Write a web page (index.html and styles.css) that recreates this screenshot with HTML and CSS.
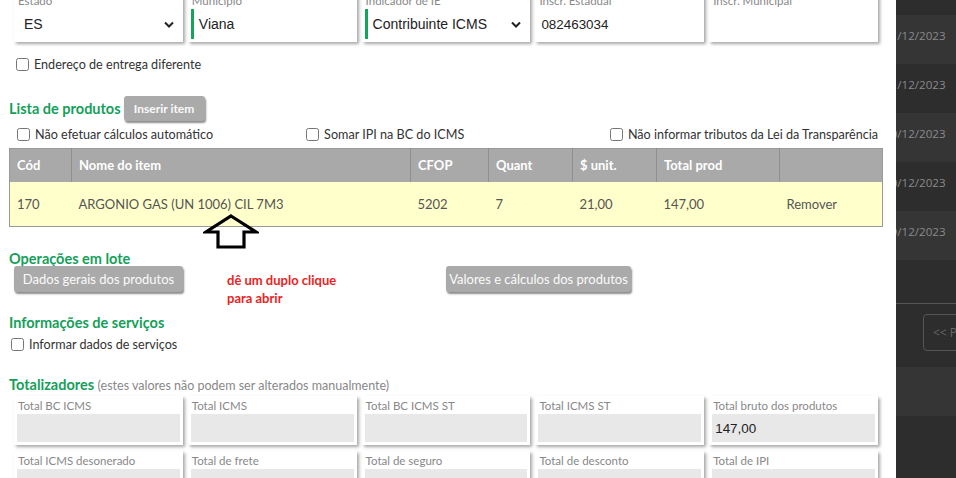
FILE: index.html
```html
<!DOCTYPE html>
<html lang="pt-BR">
<head>
    <meta charset="UTF-8">
    <title>Nota fiscal - produtos</title>
    <link rel="stylesheet" href="styles.css">
</head>
<body>
    <div class="page">
        <main class="form">
            <div class="fields">
                <div class="card">
                    <span class="card-label">Estado</span>
                    <div class="field select">ES
                        <svg class="chevron" width="10" height="7" viewBox="0 0 10 7"><path d="M1 1.5 5 5.5 9 1.5" fill="none" stroke="#222" stroke-width="2"/></svg>
                    </div>
                </div>
                <div class="card">
                    <span class="card-label">Município</span>
                    <div class="field marked">Viana</div>
                </div>
                <div class="card">
                    <span class="card-label">Indicador de IE</span>
                    <div class="field select marked">Contribuinte ICMS
                        <svg class="chevron" width="10" height="7" viewBox="0 0 10 7"><path d="M1 1.5 5 5.5 9 1.5" fill="none" stroke="#222" stroke-width="2"/></svg>
                    </div>
                </div>
                <div class="card">
                    <span class="card-label">Inscr. Estadual</span>
                    <div class="field input">082463034</div>
                </div>
                <div class="card">
                    <span class="card-label">Inscr. Municipal</span>
                    <div class="field input"></div>
                </div>
            </div>

            <label class="check delivery"><input type="checkbox"> Endereço de entrega diferente</label>

            <div class="section-head">
                <h2>Lista de produtos</h2>
                <button class="btn btn-small">Inserir item</button>
            </div>

            <div class="check-row">
                <label class="check"><input type="checkbox"> Não efetuar cálculos automático</label>
                <label class="check"><input type="checkbox"> Somar IPI na BC do ICMS</label>
                <label class="check"><input type="checkbox"> Não informar tributos da Lei da Transparência</label>
            </div>

            <div class="table-wrap">
                <table class="products">
                    <thead>
                        <tr>
                            <th class="c-cod">Cód</th>
                            <th class="c-name">Nome do item</th>
                            <th class="c-cfop">CFOP</th>
                            <th class="c-qty">Quant</th>
                            <th class="c-unit">$ unit.</th>
                            <th class="c-total">Total prod</th>
                            <th></th>
                        </tr>
                    </thead>
                    <tbody>
                        <tr>
                            <td>170</td>
                            <td>ARGONIO GAS (UN 1006) CIL 7M3</td>
                            <td>5202</td>
                            <td>7</td>
                            <td>21,00</td>
                            <td>147,00</td>
                            <td>Remover</td>
                        </tr>
                    </tbody>
                </table>
                <!-- seta de anotação -->
                <svg class="hint-arrow" width="56" height="36" viewBox="0 0 56 36">
                    <path d="M28 2 L53 18 L41 18 L41 33 L15 33 L15 18 L3 18 Z" fill="none" stroke="#000" stroke-width="3.2" stroke-linejoin="miter"/>
                </svg>
            </div>

            <h2 class="section-title">Operações em lote</h2>
            <div class="batch-row">
                <button class="btn btn-wide">Dados gerais dos produtos</button>
                <p class="note">dê um duplo clique<br>para abrir</p>
                <button class="btn btn-calc">Valores e cálculos dos produtos</button>
            </div>

            <h2 class="section-title services">Informações de serviços</h2>
            <label class="check services-check"><input type="checkbox"> Informar dados de serviços</label>

            <h2 class="section-title totals-title">Totalizadores <span class="muted">(estes valores não podem ser alterados manualmente)</span></h2>
            <div class="totals">
                <div class="card total"><span class="card-label">Total BC ICMS</span><div class="readonly"></div></div>
                <div class="card total"><span class="card-label">Total ICMS</span><div class="readonly"></div></div>
                <div class="card total"><span class="card-label">Total BC ICMS ST</span><div class="readonly"></div></div>
                <div class="card total"><span class="card-label">Total ICMS ST</span><div class="readonly"></div></div>
                <div class="card total"><span class="card-label">Total bruto dos produtos</span><div class="readonly">147,00</div></div>
                <div class="card total"><span class="card-label">Total ICMS desonerado</span><div class="readonly"></div></div>
                <div class="card total"><span class="card-label">Total de frete</span><div class="readonly"></div></div>
                <div class="card total"><span class="card-label">Total de seguro</span><div class="readonly"></div></div>
                <div class="card total"><span class="card-label">Total de desconto</span><div class="readonly"></div></div>
                <div class="card total"><span class="card-label">Total de IPI</span><div class="readonly"></div></div>
            </div>
        </main>

        <aside class="list-panel">
            <div class="row dark short"></div>
            <div class="row"><span>21/12/2023</span></div>
            <div class="row dark"><span>21/12/2023</span></div>
            <div class="row"><span>20/12/2023</span></div>
            <div class="row dark"><span>20/12/2023</span></div>
            <div class="row"><span>19/12/2023</span></div>
            <div class="row dark tall"></div>
            <div class="pager">
                <span class="pager-btn">&lt;&lt; Primeira</span>
            </div>
            <div class="row"></div>
            <div class="row dark"></div>
        </aside>
    </div>
</body>
</html>
```

FILE: styles.css
```css
* {
    box-sizing: border-box;
}

body {
    margin: 0;
    background: #ffffff;
    color: #444;
    font-family: 'Lato', 'Open Sans', sans-serif;
    font-size: 12px;
    overflow: hidden;
}

.page {
    display: grid;
    grid-template-columns: 896px 1fr;
    height: 478px;
    overflow: hidden;
}

.form {
    padding: 0 13px 0 9px;
    margin-top: -10px;
}

/* cartões de campos */
.fields,
.totals {
    display: grid;
    grid-template-columns: repeat(5, 1fr);
    gap: 6px 5px;
    margin: 0 5px;
}

.card {
    background: #fff;
    padding: 3px;
    box-shadow: 2px 2px 3px rgba(0, 0, 0, 0.35);
}

.card-label {
    display: block;
    color: #888;
    font-size: 11.5px;
    line-height: 16px;
    padding-left: 1px;
}

.field {
    position: relative;
    height: 30px;
    display: flex;
    align-items: center;
    padding-left: 7px;
    font-family: 'Liberation Sans', Arial, sans-serif;
    font-size: 14px;
    color: #222;
}

.field.input {
    font-size: 13.4px;
    padding-left: 3px;
}

.field.marked {
    border-left: 3px solid #13a55c;
    padding-left: 5px;
}

.chevron {
    position: absolute;
    right: 6px;
    top: 12px;
}

/* checkboxes */
.check {
    display: flex;
    align-items: center;
    gap: 5px;
    color: #333;
    font-size: 12.6px;
}

.check input {
    margin: 0;
    width: 13px;
    height: 13px;
}

.delivery {
    margin: 15px 0 0 7px;
}

.section-head {
    display: flex;
    align-items: center;
    gap: 3px;
    margin-top: 24px;
}

h2 {
    margin: 0;
    color: #14a05a;
    font-size: 14.5px;
    font-weight: 700;
}

.btn {
    background: #aaaaaa;
    border: none;
    border-radius: 3px;
    color: #fafafa;
    font-family: 'Lato', 'Open Sans', sans-serif;
    font-size: 13px;
    padding: 0 8px;
    height: 26px;
    box-shadow: 1px 2px 2px rgba(0, 0, 0, 0.45);
    cursor: pointer;
}

.btn-small {
    font-weight: 700;
    font-size: 12px;
    height: 25px;
    width: 81px;
    padding: 0;
}

.check-row {
    display: flex;
    margin: 6px 0 0 8px;
    color: #333;
}

.check-row .check:nth-child(2) {
    margin-left: 93px;
}

.check-row .check:nth-child(3) {
    margin-left: auto;
    margin-right: 5px;
}

/* tabela de produtos */
.table-wrap {
    position: relative;
    margin-top: 6px;
}

.products {
    width: 100%;
    border-collapse: collapse;
    border: 1px solid #999;
}

.products th {
    background: #a9a9a9;
    color: #fff;
    font-weight: 700;
    font-size: 13px;
    text-align: left;
    height: 33px;
    padding: 0 7px;
    border-left: 1px solid #8f8f8f;
}

.products th:first-child {
    border-left: none;
}

.products td {
    background: #ffffcc;
    color: #555;
    font-size: 13px;
    height: 45px;
    padding: 0 7px;
}

.c-cod { width: 62px; }
.c-name { width: 339px; }
.c-cfop { width: 78px; }
.c-qty { width: 84px; }
.c-unit { width: 84px; }
.c-total { width: 123px; }

.hint-arrow {
    position: absolute;
    left: 194px;
    top: 66px;
}

.section-title {
    margin-top: 23px;
}

.batch-row {
    display: flex;
    align-items: flex-start;
    margin: -1px 0 0 5px;
}

.btn-wide {
    width: 169px;
}

.btn-calc {
    width: 185px;
    padding: 0;
}

.note {
    margin: 5px 0 0 44px;
    width: 219px;
    color: #ee2222;
    font-weight: 700;
    font-size: 13px;
    line-height: 18px;
}

.services {
    margin-top: 7px;
}

.services-check {
    margin: 6px 0 0 2px;
}

.totals-title {
    margin-top: 24px;
}

.muted {
    color: #888;
    font-weight: 400;
    font-size: 12.5px;
}

.totals {
    margin-top: 3px;
}

.total {
    padding-top: 2px;
}

.total .card-label {
    line-height: 15px;
}

.readonly {
    height: 28px;
    background: #e8e8e8;
    display: flex;
    align-items: center;
    padding-left: 3px;
    font-family: 'Liberation Sans', Arial, sans-serif;
    font-size: 13.4px;
    color: #222;
}

.total .readonly {
    margin-top: 1px;
}

/* painel da lista ao fundo */
.list-panel {
    background: #2d2d2d;
    overflow: hidden;
    color: #8a8a8a;
    font-family: 'Open Sans', sans-serif;
    font-size: 11.6px;
}

.row {
    height: 49px;
    background: #353535;
    display: flex;
    align-items: center;
    padding-bottom: 9px;
}

.row.dark {
    background: #2d2d2d;
}

.row.short {
    height: 15px;
    padding: 0;
}

.row.tall {
    height: 43px;
}

.row span {
    margin-left: -12px;
    white-space: nowrap;
}

.pager {
    height: 64px;
    border-top: 1px solid #555;
    background: #2d2d2d;
    padding: 10px 0 0 27px;
}

.pager-btn {
    display: inline-block;
    border: 1px solid #555;
    border-radius: 4px;
    padding: 9px 9px;
    color: #666;
    font-size: 12px;
    white-space: nowrap;
}
```
